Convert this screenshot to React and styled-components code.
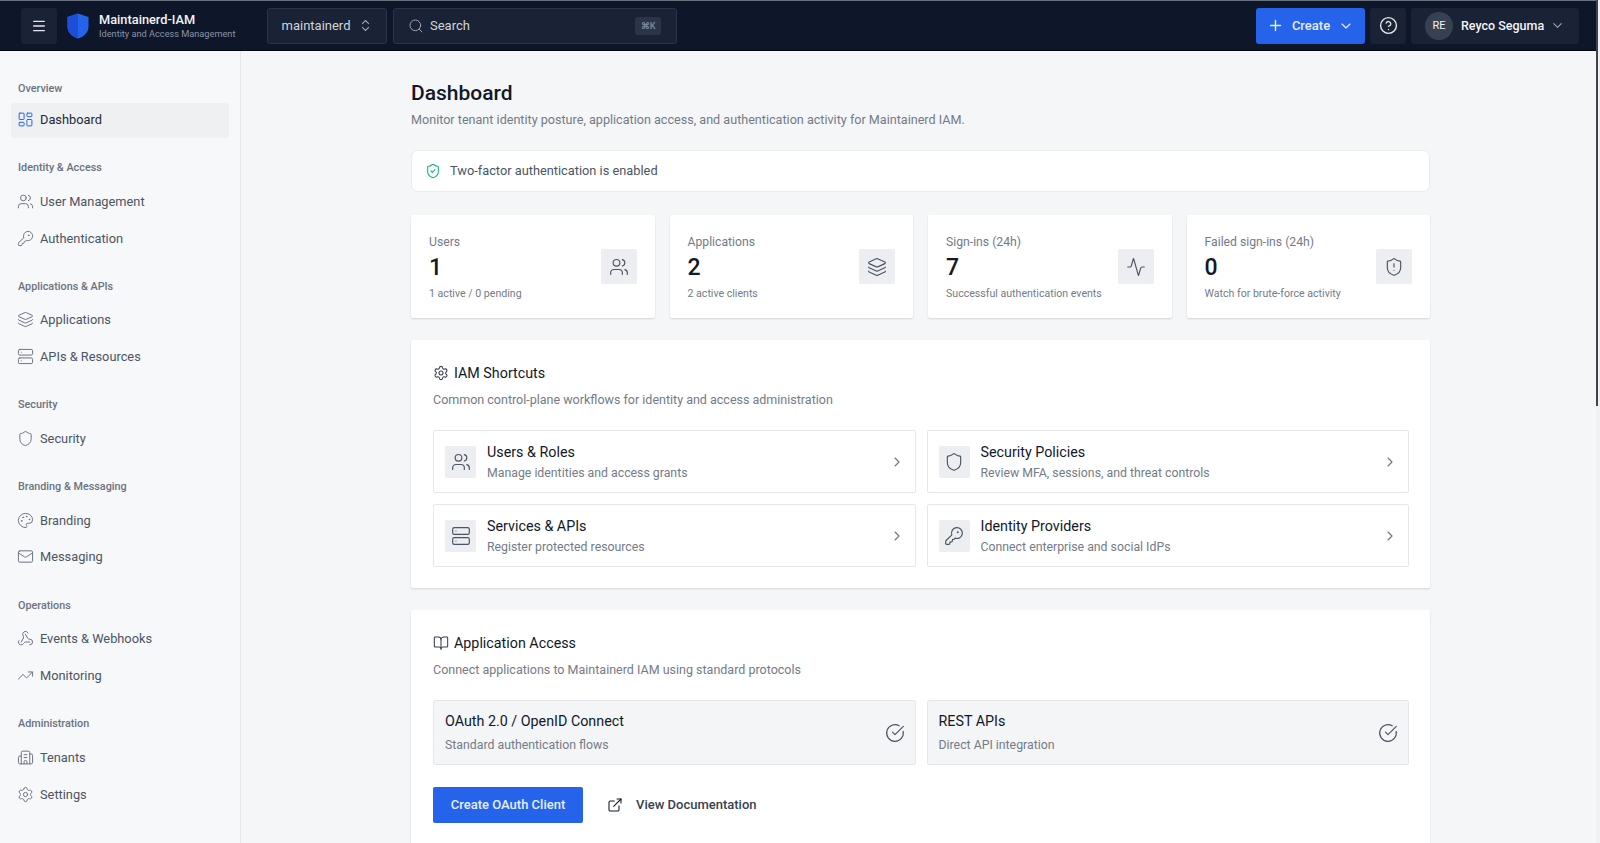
import React from 'react';
import styled, { createGlobalStyle } from 'styled-components';
import {
  Menu, ChevronsUpDown, Search, Plus, ChevronDown, CircleHelp, LayoutDashboard, Users, KeyRound,
  Layers, Server, Shield, Palette, Mail, Webhook, TrendingUp, Building2, Settings, ShieldCheck,
  Activity, ShieldAlert, BookOpen, CircleCheckBig, ExternalLink, ChevronRight,
} from 'lucide-react';

const navSections = [
  { title: 'Overview', items: [{ label: 'Dashboard', icon: LayoutDashboard, active: true }] },
  { title: 'Identity & Access', items: [{ label: 'User Management', icon: Users }, { label: 'Authentication', icon: KeyRound }] },
  { title: 'Applications & APIs', items: [{ label: 'Applications', icon: Layers }, { label: 'APIs & Resources', icon: Server }] },
  { title: 'Security', items: [{ label: 'Security', icon: Shield }] },
  { title: 'Branding & Messaging', items: [{ label: 'Branding', icon: Palette }, { label: 'Messaging', icon: Mail }] },
  { title: 'Operations', items: [{ label: 'Events & Webhooks', icon: Webhook }, { label: 'Monitoring', icon: TrendingUp }] },
  { title: 'Administration', items: [{ label: 'Tenants', icon: Building2 }, { label: 'Settings', icon: Settings }] },
];

const stats = [
  { label: 'Users', value: '1', note: '1 active / 0 pending', icon: Users },
  { label: 'Applications', value: '2', note: '2 active clients', icon: Layers },
  { label: 'Sign-ins (24h)', value: '7', note: 'Successful authentication events', icon: Activity },
  { label: 'Failed sign-ins (24h)', value: '0', note: 'Watch for brute-force activity', icon: ShieldAlert },
];

const shortcuts = [
  { title: 'Users & Roles', desc: 'Manage identities and access grants', icon: Users },
  { title: 'Security Policies', desc: 'Review MFA, sessions, and threat controls', icon: Shield },
  { title: 'Services & APIs', desc: 'Register protected resources', icon: Server },
  { title: 'Identity Providers', desc: 'Connect enterprise and social IdPs', icon: KeyRound },
];

const protocols = [
  { title: 'OAuth 2.0 / OpenID Connect', desc: 'Standard authentication flows' },
  { title: 'REST APIs', desc: 'Direct API integration' },
];

const App = () => (
  <Page>
    <GlobalStyle />
    <Header>
      <IconButton><Menu size={16} strokeWidth={2} /></IconButton>
      <Logo viewBox="0 0 22 26">
        <path d="M11 0.5 21.5 4v9.5c0 6-4.5 10-10.5 12C5 23.500.5 19.500.5 13.500V4z" fill="#2563eb" />
        <path d="M11 0.5V25.500C5 23.500.5 19.500.5 13.500V4z" fill="#1d4ed8" />
      </Logo>
      <Brand>
        <BrandName>Maintainerd-IAM</BrandName>
        <BrandSub>Identity and Access Management</BrandSub>
      </Brand>
      <TenantSelect>
        maintainerd
        <ChevronsUpDown size={15} strokeWidth={1.75} color="#9ca3af" />
      </TenantSelect>
      <SearchBox>
        <Search size={16} strokeWidth={1.5} color="#9ca3af" />
        <SearchText>Search</SearchText>
        <Kbd>⌘K</Kbd>
      </SearchBox>
      <HeaderRight>
        <CreateButton>
          <Plus size={17} strokeWidth={2} />
          Create
          <ChevronDown size={16} strokeWidth={1.75} />
        </CreateButton>
        <IconButton><CircleHelp size={19} strokeWidth={1.75} /></IconButton>
        <UserMenu>
          <Avatar>RE</Avatar>
          <UserName>Reyco Seguma</UserName>
          <ChevronDown size={15} strokeWidth={1.75} color="#9ca3af" />
        </UserMenu>
      </HeaderRight>
    </Header>
    <Body>
      <Sidebar>
        {navSections.map((section) => (
          <NavSection key={section.title}>
            <NavTitle>{section.title}</NavTitle>
            {section.items.map((item) => (
              <NavItem key={item.label} $active={item.active}>
                <item.icon size={17} strokeWidth={1.4} />
                <span>{item.label}</span>
              </NavItem>
            ))}
          </NavSection>
        ))}
      </Sidebar>
      <Main>
        <PageTitle>Dashboard</PageTitle>
        <PageSub>Monitor tenant identity posture, application access, and authentication activity for Maintainerd IAM.</PageSub>
        <Banner>
          <ShieldCheck size={16} strokeWidth={1.6} color="#10b981" />
          <span>Two-factor authentication is enabled</span>
        </Banner>
        <StatGrid>
          {stats.map((stat) => (
            <StatCard key={stat.label}>
              <div>
                <StatLabel>{stat.label}</StatLabel>
                <StatValue>{stat.value}</StatValue>
                <StatNote>{stat.note}</StatNote>
              </div>
              <StatIcon><stat.icon size={20} strokeWidth={1.4} /></StatIcon>
            </StatCard>
          ))}
        </StatGrid>
        <Panel>
          <PanelHead><Settings size={16} strokeWidth={1.6} /><span>IAM Shortcuts</span></PanelHead>
          <PanelSub>Common control-plane workflows for identity and access administration</PanelSub>
          <TileGrid>
            {shortcuts.map((tile) => (
              <Tile key={tile.title}>
                <TileIcon><tile.icon size={20} strokeWidth={1.4} /></TileIcon>
                <TileText>
                  <TileTitle>{tile.title}</TileTitle>
                  <TileDesc>{tile.desc}</TileDesc>
                </TileText>
                <ChevronRight size={16} strokeWidth={1.6} color="#6b7280" />
              </Tile>
            ))}
          </TileGrid>
        </Panel>
        <Panel $tall>
          <PanelHead><BookOpen size={16} strokeWidth={1.6} /><span>Application Access</span></PanelHead>
          <PanelSub>Connect applications to Maintainerd IAM using standard protocols</PanelSub>
          <TileGrid>
            {protocols.map((item) => (
              <ProtocolTile key={item.title}>
                <TileText>
                  <TileTitle>{item.title}</TileTitle>
                  <ProtocolDesc>{item.desc}</ProtocolDesc>
                </TileText>
                <CircleCheckBig size={20} strokeWidth={1.4} color="#4b5563" />
              </ProtocolTile>
            ))}
          </TileGrid>
          <Actions>
            <PrimaryButton>Create OAuth Client</PrimaryButton>
            <DocLink><ExternalLink size={16} strokeWidth={1.6} /><span>View Documentation</span></DocLink>
          </Actions>
        </Panel>
      </Main>
    </Body>
    <ScrollTrack><ScrollThumb /></ScrollTrack>
  </Page>
);

export default App;

const GlobalStyle = createGlobalStyle`
  html, body {
    margin: 0;
    height: 100%;
    overflow: hidden;
  }
  body {
    font-family: Roboto, "Noto Sans", sans-serif;
    background: #f5f6f8;
    color: #111827;
  }
  * {
    box-sizing: border-box;
  }
`;

const Page = styled.div`
  position: relative;
  height: 100vh;
  overflow: hidden;
  padding-right: 4px;
`;

const ScrollTrack = styled.div`
  position: absolute;
  top: 0;
  right: 0;
  bottom: 0;
  width: 4px;
  background: #f0f1f3;
`;

const ScrollThumb = styled.div`
  width: 2px;
  height: 406px;
  background: #3f444c;
`;

const Header = styled.header`
  height: 51px;
  display: flex;
  align-items: center;
  padding: 0 17px 0 21px;
  background: #0e162a;
  border-top: 1px solid #6b7280;
  border-bottom: 1px solid #05070d;
  color: #f3f4f6;
`;

const IconButton = styled.div`
  width: 36px;
  height: 36px;
  display: flex;
  align-items: center;
  justify-content: center;
  border-radius: 3px;
  background: #1a2235;
  color: #e5e7eb;
`;

const Logo = styled.svg`
  width: 22px;
  height: 26px;
  margin-left: 10px;
`;

const Brand = styled.div`
  width: 167.500px;
  margin-left: 10px;
`;

const BrandName = styled.div`
  font-size: 12.800px;
  font-weight: 500;
  line-height: 15px;
  color: #f3f4f6;
`;

const BrandSub = styled.div`
  font-size: 9.200px;
  line-height: 13px;
  color: #8b93a3;
`;

const TenantSelect = styled.div`
  width: 120px;
  height: 36px;
  display: flex;
  align-items: center;
  gap: 7px;
  padding-left: 14px;
  border: 1px solid #2b3448;
  border-radius: 3px;
  background: #1a2235;
  font-size: 13px;
  color: #d1d5db;
`;

const SearchBox = styled.div`
  width: 284px;
  height: 36px;
  margin-left: 6.500px;
  display: flex;
  align-items: center;
  padding: 0 15px 0 14px;
  border: 1px solid #2b3448;
  border-radius: 3px;
  background: #1a2235;
`;

const SearchText = styled.span`
  flex: 1;
  margin-left: 6px;
  font-size: 13px;
  color: #d1d5db;
`;

const Kbd = styled.span`
  width: 26px;
  height: 18px;
  display: flex;
  align-items: center;
  justify-content: center;
  border-radius: 3px;
  background: #2b3448;
  font-size: 9px;
  font-weight: 600;
  color: #7c8596;
`;

const HeaderRight = styled.div`
  margin-left: auto;
  display: flex;
  align-items: center;
  gap: 5px;
`;

const CreateButton = styled.div`
  width: 109px;
  height: 36px;
  display: flex;
  align-items: center;
  justify-content: center;
  gap: 8px;
  border-radius: 3px;
  background: #2563eb;
  font-size: 13px;
  font-weight: 500;
  color: #e5edff;
`;

const UserMenu = styled.div`
  width: 168px;
  height: 36px;
  display: flex;
  align-items: center;
  padding: 0 14px;
  border-radius: 3px;
  background: #1a2235;
`;

const Avatar = styled.div`
  width: 28px;
  height: 28px;
  flex: none;
  display: flex;
  align-items: center;
  justify-content: center;
  border-radius: 50%;
  background: #374151;
  font-size: 11px;
  font-weight: 400;
  color: #f3f4f6;
`;

const UserName = styled.span`
  flex: 1;
  margin-left: 8px;
  font-size: 12.500px;
  font-weight: 500;
  white-space: nowrap;
  color: #f3f4f6;
`;

const Body = styled.div`
  display: flex;
  align-items: stretch;
  height: calc(100vh - 51px);
`;

const Sidebar = styled.aside`
  width: 241px;
  flex: none;
  padding: 28.500px 11px 0;
  border-right: 1px solid #e5e7eb;
  background: #f7f8fa;
`;

const NavSection = styled.section`
  display: flex;
  flex-direction: column;
  margin-bottom: 21.300px;
`;

const NavTitle = styled.div`
  height: 16px;
  margin: 1px 0 6.500px;
  padding-left: 7px;
  font-size: 10.800px;
  font-weight: 500;
  line-height: 16px;
  color: #6b7280;
`;

const NavItem = styled.div`
  height: ${(p) => (p.$active ? 35 : 36.9)}px;
  display: flex;
  align-items: center;
  gap: 6px;
  padding: 0 0 ${(p) => (p.$active ? 2 : 0)}px 6px;
  border-radius: 3px;
  background: ${(p) => (p.$active ? '#eef0f2' : 'transparent')};
  font-size: 12.800px;
  color: ${(p) => (p.$active ? '#1f2937' : '#4b5563')};
  svg {
    color: ${(p) => (p.$active ? '#2563eb' : '#6b7280')};
  }
`;

const Main = styled.main`
  flex: 1;
  min-width: 0;
  padding: 28px 166px 0 170px;
  overflow: hidden;
`;

const PageTitle = styled.h1`
  margin: 0;
  font-size: 21px;
  font-weight: 500;
  line-height: 28px;
  color: #111827;
`;

const PageSub = styled.p`
  margin: 2.500px 0 0;
  font-size: 12.600px;
  line-height: 20px;
  color: #737b88;
`;

const Banner = styled.div`
  height: 42.500px;
  margin-top: 20px;
  display: flex;
  align-items: center;
  gap: 9px;
  padding-left: 13px;
  border: 1px solid #e9ebef;
  border-radius: 7px;
  background: #fff;
  font-size: 12.800px;
  color: #4b5563;
`;

const StatGrid = styled.div`
  margin-top: 23px;
  display: grid;
  grid-template-columns: repeat(4, 1fr);
  gap: 15px;
`;

const StatCard = styled.div`
  height: 103px;
  display: flex;
  align-items: center;
  justify-content: space-between;
  padding: 2px 18px 0;
  border-radius: 2px;
  background: #fff;
  box-shadow: 0 1px 2px rgba(17, 24, 39, 0.14);
`;

const StatLabel = styled.div`
  font-size: 12.200px;
  line-height: 16px;
  color: #737b88;
`;

const StatValue = styled.div`
  margin-top: 3.700px;
  font-size: 23px;
  font-weight: 500;
  line-height: 28px;
  color: #111827;
`;

const StatNote = styled.div`
  margin-top: 4.600px;
  font-size: 10.600px;
  line-height: 14px;
  color: #737b88;
`;

const StatIcon = styled.div`
  width: 36px;
  height: 35px;
  margin-top: -2px;
  display: flex;
  align-items: center;
  justify-content: center;
  border-radius: 2px;
  background: #eceef1;
  color: #4b5563;
`;

const Panel = styled.section`
  min-height: ${(p) => (p.$tall ? 300 : 248)}px;
  margin-top: 22px;
  padding: 23px 21px 21px 22px;
  border-radius: 2px;
  background: #fff;
  box-shadow: 0 1px 2px rgba(17, 24, 39, 0.14);
`;

const PanelHead = styled.h2`
  margin: 0;
  display: flex;
  align-items: center;
  gap: 5px;
  font-size: 14.300px;
  font-weight: 450;
  line-height: 20px;
  color: #111827;
  svg {
    color: #374151;
  }
`;

const PanelSub = styled.p`
  margin: 8px 0 0;
  font-size: 12.500px;
  line-height: 18px;
  color: #737b88;
`;

const TileGrid = styled.div`
  margin-top: 21px;
  display: grid;
  grid-template-columns: repeat(2, 1fr);
  gap: 11px;
`;

const Tile = styled.div`
  height: 63px;
  display: flex;
  align-items: center;
  gap: 11px;
  padding: 0 10px 0 11px;
  border: 1px solid #e5e7eb;
  border-radius: 2px;
  background: #fff;
`;

const ProtocolTile = styled(Tile)`
  height: 65px;
  padding: 0 10px 0 11px;
  background: #f4f5f7;
`;

const TileIcon = styled.div`
  width: 31px;
  height: 32px;
  flex: none;
  display: flex;
  align-items: center;
  justify-content: center;
  border-radius: 2px;
  background: #eceef1;
  color: #4b5563;
`;

const TileText = styled.div`
  flex: 1;
  min-width: 0;
`;

const TileTitle = styled.div`
  font-size: 14.300px;
  font-weight: 450;
  line-height: 20px;
  color: #111827;
`;

const TileDesc = styled.div`
  margin-top: 2px;
  font-size: 12.300px;
  line-height: 18px;
  color: #737b88;
`;

const ProtocolDesc = styled(TileDesc)`
  margin-top: 5px;
`;

const Actions = styled.div`
  margin-top: 21.500px;
  display: flex;
  align-items: center;
`;

const PrimaryButton = styled.div`
  width: 150px;
  height: 36px;
  display: flex;
  align-items: center;
  justify-content: center;
  border-radius: 2px;
  background: #2563eb;
  font-size: 13px;
  font-weight: 500;
  color: #e8efff;
`;

const DocLink = styled.div`
  margin-left: 24px;
  display: flex;
  align-items: center;
  gap: 13px;
  font-size: 13px;
  font-weight: 500;
  color: #374151;
  svg {
    color: #111827;
  }
`;
